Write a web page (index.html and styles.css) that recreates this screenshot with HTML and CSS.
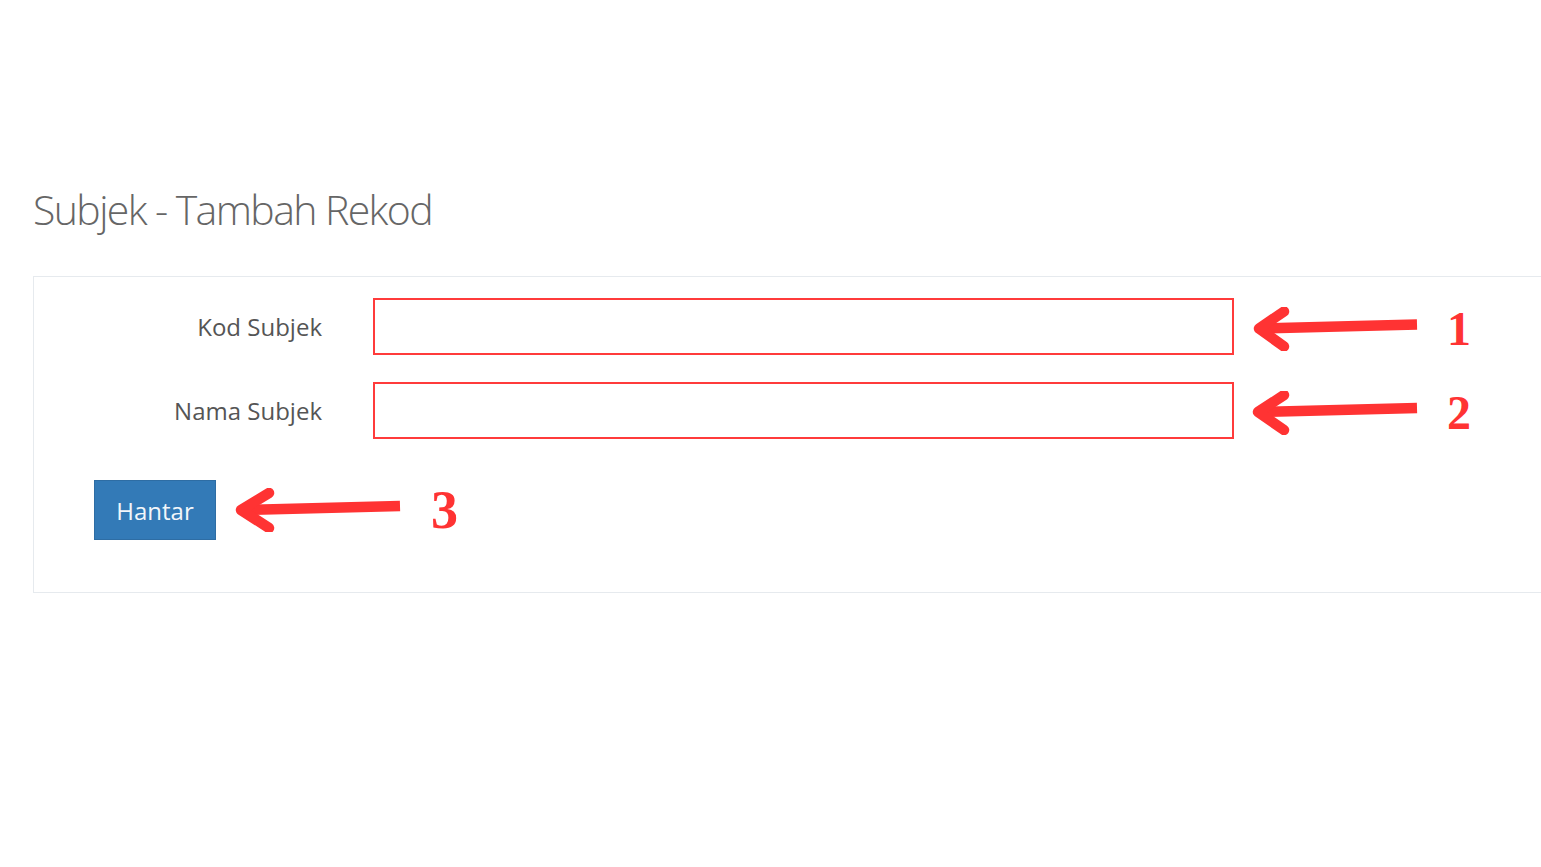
FILE: index.html
```html
<!DOCTYPE html>
<html lang="ms">
<head>
  <meta charset="UTF-8" />
  <meta name="viewport" content="width=device-width, initial-scale=1.0"/>
  <title>Subjek - Tambah Rekod</title>
  <link rel="stylesheet" href="styles.css">
</head>
<body>
  <div class="page">
    <h1 class="page-title">Subjek - Tambah Rekod</h1>

    <form class="panel">
      <div class="form-row">
        <label class="form-label" for="kod">Kod Subjek</label>
        <input class="form-input" id="kod" type="text">
        <div class="note">
          <svg class="arrow" viewBox="0 0 170 44" width="170" height="44">
            <line x1="167" y1="17.5" x2="11" y2="21.5" class="shaft"/>
            <polyline points="34,4.5 9,21.5 34,39.5" class="head"/>
          </svg>
          <span class="note-num">1</span>
        </div>
      </div>

      <div class="form-row">
        <label class="form-label" for="nama">Nama Subjek</label>
        <input class="form-input" id="nama" type="text">
        <div class="note">
          <svg class="arrow" viewBox="0 0 170 44" width="170" height="44">
            <line x1="167" y1="17" x2="10" y2="21" class="shaft"/>
            <polyline points="34,4 8,21 34,39" class="head"/>
          </svg>
          <span class="note-num">2</span>
        </div>
      </div>

      <div class="form-actions">
        <button class="btn-hantar" type="button">Hantar</button>
        <div class="note note-btn">
          <svg class="arrow" viewBox="0 0 170 44" width="170" height="44">
            <line x1="166" y1="18" x2="9" y2="22" class="shaft"/>
            <polyline points="35,5 7,22 35,40" class="head"/>
          </svg>
          <span class="note-num note-num-lg">3</span>
        </div>
      </div>
    </form>
  </div>
</body>
</html>
```

FILE: styles.css
```css
body {
  margin: 0;
  background-color: #ffffff;
  font-family: 'Open Sans', 'Noto Sans', sans-serif;
  overflow: hidden;
}

.page {
  padding: 181px 0 0 33px;
}

.page-title {
  margin: 0 0 38px;
  font-size: 41px;
  font-weight: 300;
  letter-spacing: -1.6px;
  color: #666666;
  line-height: 57px;
}

.panel {
  border: 1px solid #e6eaee;
  border-right: none;
  padding: 21px 0 52px;
}

.form-row {
  display: flex;
  align-items: center;
  margin-bottom: 27px;
}

.form-label {
  width: 288px;
  margin-right: 51px;
  text-align: right;
  font-size: 24px;
  color: #555555;
}

.form-input {
  box-sizing: border-box;
  width: 861px;
  height: 57px;
  margin: 0;
  border: 2px solid #ff3b3b;
  background: #ffffff;
  outline: none;
}

.note {
  display: flex;
  align-items: center;
  margin-left: 16px;
  padding-top: 5px;
}

.note-btn {
  margin-left: 18px;
  padding-top: 0;
}

.arrow .shaft {
  stroke: #ff3333;
  stroke-width: 10.5;
  stroke-linecap: butt;
}

.arrow .head {
  fill: none;
  stroke: #ff3333;
  stroke-width: 10.5;
  stroke-linecap: round;
  stroke-linejoin: round;
}

.note-num {
  margin-left: 27px;
  font-family: 'Liberation Serif', serif;
  font-weight: bold;
  font-size: 48px;
  line-height: 48px;
  color: #ff3333;
}

.note-num-lg {
  font-size: 54px;
}

.form-actions {
  display: flex;
  align-items: center;
  margin-top: 41px;
  padding-left: 60px;
}

.btn-hantar {
  width: 122px;
  height: 60px;
  border: 1px solid #2e6da4;
  background-color: #337ab7;
  color: #f2f6fa;
  font-family: 'Open Sans', 'Noto Sans', sans-serif;
  font-size: 24px;
  padding: 0;
  cursor: pointer;
}
```
